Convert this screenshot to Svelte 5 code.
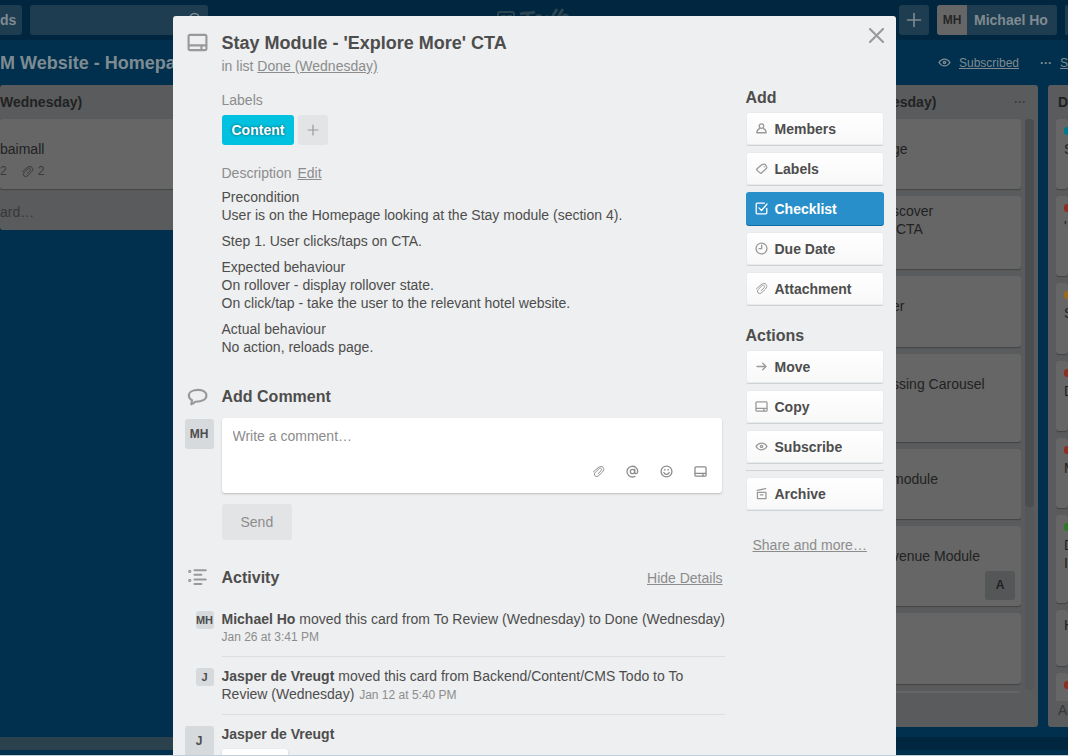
<script lang="ts">
    interface Action {
        icon: string;
        label: string;
        active?: boolean;
    }

    const add_actions: Action[] = [
        { icon: "member", label: "Members" },
        { icon: "label", label: "Labels" },
        { icon: "check", label: "Checklist", active: true },
        { icon: "clock", label: "Due Date" },
        { icon: "clip", label: "Attachment" },
    ];
    const card_actions: Action[] = [
        { icon: "arrow", label: "Move" },
        { icon: "card", label: "Copy" },
        { icon: "eye", label: "Subscribe" },
    ];

    const description = [
        ["Precondition", "User is on the Homepage looking at the Stay module (section 4)."],
        ["Step 1. User clicks/taps on CTA."],
        [
            "Expected behaviour",
            "On rollover - display rollover state.",
            "On click/tap - take the user to the relevant hotel website.",
        ],
        ["Actual behaviour", "No action, reloads page."],
    ];

    const activity = [
        {
            initials: "MH",
            name: "Michael Ho",
            text: "moved this card from To Review (Wednesday) to Done (Wednesday)",
            date: "Jan 26 at 3:41 PM",
            single: true,
        },
        {
            initials: "J",
            name: "Jasper de Vreugt",
            text: "moved this card from Backend/Content/CMS Todo to To Review (Wednesday)",
            date: "Jan 12 at 5:40 PM",
            single: false,
        },
    ];

    const cards = [
        { lines: ["ge"], height: 70, labels: true },
        { lines: ["scover", "\u00a0CTA"], height: 73, labels: false },
        { lines: ["er"], height: 71, labels: true },
        { lines: ["ssing Carousel"], height: 88, labels: true },
        { lines: ["module"], height: 70, labels: true },
        { lines: ["venue Module"], height: 80, labels: true, member: "A" },
        { lines: [], height: 71, labels: false },
        { lines: [], height: 20, labels: false },
    ];

    const next_cards = [
        { color: "#00798c", lines: ["S"], height: 70 },
        { color: "#8c2f26", lines: ["'"], height: 80 },
        { color: "#9a6a20", lines: ["S"], height: 71 },
        { color: "#8c2f26", lines: ["D"], height: 70 },
        { color: "#8c2f26", lines: ["M"], height: 70 },
        { color: "#2c7a28", lines: ["D", "I"], height: 88 },
        { color: "", lines: ["H"], height: 56 },
        { color: "#8c2f26", lines: [], height: 30 },
    ];

    let comment = $state("");
</script>

{#snippet icon(name: string, size: number)}
    <svg
        width={size}
        height={size}
        viewBox="0 0 16 16"
        fill="none"
        stroke="currentColor"
        stroke-width="1.6"
        stroke-linecap="round"
        stroke-linejoin="round"
        aria-hidden="true"
    >
        {#if name === "member"}
            <circle cx="8" cy="5" r="2.8" />
            <path d="M5.800 8.300C3.300 9 2.400 10.500 2.200 13.200h11.600C13.600 10.500 12.700 9 10.200 8.300" />
        {:else if name === "label"}
            <path d="M8.600 3.200 11.600 2.700a1.300 1.300 0 0 1 1.300.7l1.500 2.800a1.300 1.300 0 0 1-.2 1.400L8.300 13.300a1.500 1.500 0 0 1-2.200.1L2.600 10.300a1.500 1.500 0 0 1-.1-2.100z" />
            <path d="M11.300 5.800v.1" />
        {:else if name === "check"}
            <path d="M11.500 1.500H2.600A1.100 1.100 0 0 0 1.500 2.600v10.800a1.100 1.100 0 0 0 1.100 1.100h10.800a1.100 1.100 0 0 0 1.100-1.100V8" />
            <path d="m4.800 7.200 3.200 3.300 6.800-8" />
        {:else if name === "clock"}
            <circle cx="8" cy="8" r="6.700" />
            <path d="M8.200 3.800v4.400H5" />
        {:else if name === "clip"}
            <path
                d="m1.800 8.400 5.600-5c2.200-2 4.700-2.100 6.200-.5 1.500 1.700 1.100 4-.9 5.900l-4.200 4.100c-1.600 1.500-3.600 1.600-4.800.4-1.100-1.200-.9-3 .6-4.500l4.200-4.100c1-.9 2.200-1 2.900-.2.700.8.500 1.900-.4 2.800l-3.500 3.300"
                stroke-width="1.200"
            />
        {:else if name === "arrow"}
            <path d="M2.500 8h11M9.500 4l4 4-4 4" />
        {:else if name === "card"}
            <rect x="1.200" y="2.200" width="13.600" height="11.600" rx="1.200" />
            <path d="M1.500 10.200h13M11 10.500v3" />
        {:else if name === "eye"}
            <path d="M1.200 8C3 5.200 5.300 3.900 8 3.900S13 5.200 14.800 8C13 10.800 10.700 12.100 8 12.100S3 10.800 1.200 8z" />
            <circle cx="8" cy="8" r="1.400" />
        {:else if name === "archive"}
            <path d="M3 6.600h10.500v7.600H3zM2.700 4.200 13.200 2M6.600 9.600h3.300" />
        {:else if name === "at"}
            <circle cx="8" cy="8" r="2.700" />
            <path d="M10.700 5.300v4.200c0 1.700 3.800 1.500 3.800-1.500A6.600 6.600 0 1 0 11 14" />
        {:else if name === "smile"}
            <circle cx="8" cy="8" r="6.700" />
            <path d="M4.700 9.300c1.200 3 5.400 3 6.600 0M6 5.300v1M10 5.300v1" />
        {:else if name === "comment"}
            <path d="M8.600 2.200c-4 0-7.200 1.500-7.200 4.200 0 1.700 1 2.900 2.500 3.600L3.200 13.200c1.300-.3 2.400-1.200 3-2 5 .2 8.600-1.700 8.600-4.700 0-2.800-2.600-4.300-6.200-4.300z" />
        {:else if name === "list"}
            <path d="M6 1.800h9M6 5.400h5.500M6 9.200h9M6 12.800h5.500" />
            <circle cx="2.200" cy="2.700" r="0.500" />
            <circle cx="2.200" cy="9.900" r="0.500" />
        {:else if name === "search"}
            <circle cx="8" cy="6.500" r="5" />
            <path d="m4.500 10.500-3 4" />
        {:else if name === "close"}
            <path d="m1 1 14 14M15 1 1 15" stroke-width="2.200" />
        {:else if name === "plus"}
            <path d="M8 1.500v13M1.500 8h13" />
        {/if}
    </svg>
{/snippet}

{#snippet action_button(action: Action)}
    <button class="action" class:active={action.active}>
        {@render icon(action.icon, 13)}
        {action.label}
    </button>
{/snippet}

<div class="app">
    <header class="topbar">
        <div class="left">
            <button class="boards">ds</button>
            <label class="search">
                <input type="text" aria-label="Search" />
                {@render icon("search", 15)}
            </label>
        </div>
        <svg class="logo" width="74" height="30" viewBox="0 0 74 30" fill="none" stroke="currentColor" stroke-width="2" aria-hidden="true">
            <rect x="1" y="7" width="16" height="17" rx="2" />
            <path d="M5 11h3v9H5zM11 11h3v5h-3z" />
            <path d="M23 9c5-2 10 0 15-2M31 9l-4 15M36 22l3-10c2-2 4-2 5 0M46 18c7-2 7-7 3-6-4 2-5 11 1 9L60 4M56 20 66 4M62 20c2-10 7-12 9-8s-7 11-9 6" stroke-width="3" />
        </svg>
        <div class="right">
            <button class="add" aria-label="Create">{@render icon("plus", 16)}</button>
            <button class="user"><span>MH</span>Michael Ho</button>
            <span class="edge"></span>
        </div>
    </header>

    <div class="board-bar">
        <h1>M Website - Homepa</h1>
        <div class="board-links">
            {@render icon("eye", 13)}
            <a href="#subscribed">Subscribed</a>
            <b>···</b>
            <a class="cut" href="#menu">S</a>
        </div>
    </div>

    <div class="lists">
        <section class="list first">
            <h2>Wednesday)</h2>
            <article class="tile labelled">
                <p>baimall</p>
                <div class="badges"><span>2</span>{@render icon("clip", 13)}<span>2</span></div>
            </article>
            <a class="more" href="#add">ard…</a>
        </section>
        <section class="list">
            <h2>esday) <span>···</span></h2>
            <div class="scroller">
                <div class="tiles">
                    {#each cards as card}
                        <article class="tile" class:labelled={card.labels} style:height="{card.height}px">
                            {#each card.lines as line}
                                <p>{line}</p>
                            {/each}
                            {#if card.member}
                                <span class="initials">{card.member}</span>
                            {/if}
                        </article>
                    {/each}
                </div>
                <div class="track"><div class="thumb"></div></div>
            </div>
        </section>
        <section class="list last">
            <h2>D</h2>
            <div class="tiles">
                {#each next_cards as card}
                    <article class="tile" style:height="{card.height}px">
                        {#if card.color}
                            <i style:background={card.color}></i>
                        {/if}
                        {#each card.lines as line}
                            <p>{line}</p>
                        {/each}
                    </article>
                {/each}
            </div>
            <a class="more" href="#add">Ad</a>
        </section>
    </div>
    <div class="hscroll"><div></div></div>

    <div class="overlay">
        <div class="modal" role="dialog" aria-labelledby="card-title">
            <div class="title">
                <span class="glyph">{@render icon("card", 21)}</span>
                <div>
                    <h2 id="card-title">Stay Module - 'Explore More' CTA</h2>
                    <p>in list <a href="#list">Done (Wednesday)</a></p>
                </div>
                <button class="close" aria-label="Close">{@render icon("close", 15)}</button>
            </div>

            <div class="columns">
                <main>
                    <div class="details">
                        <h4>Labels</h4>
                        <div class="labels">
                            <button class="tag">Content</button>
                            <button class="tag-add" aria-label="Add label">{@render icon("plus", 12)}</button>
                        </div>
                        <h4>Description <a href="#edit">Edit</a></h4>
                        <div class="description">
                            {#each description as lines}
                                <p>
                                    {#each lines as line, i}
                                        {#if i}<br />{/if}{line}
                                    {/each}
                                </p>
                            {/each}
                        </div>
                    </div>

                    <div class="heading">
                        <span class="glyph">{@render icon("comment", 21)}</span>
                        <h3>Add Comment</h3>
                    </div>
                    <div class="row">
                        <span class="avatar">MH</span>
                        <form>
                            <div class="box">
                                <textarea bind:value={comment} aria-label="Comment" placeholder="Write a comment…"></textarea>
                                <div class="tools">
                                    <button type="button" aria-label="Attach">{@render icon("clip", 13)}</button>
                                    <button type="button" aria-label="Mention">{@render icon("at", 13)}</button>
                                    <button type="button" aria-label="Emoji">{@render icon("smile", 13)}</button>
                                    <button type="button" aria-label="Card">{@render icon("card", 13)}</button>
                                </div>
                            </div>
                            <button type="button" class="send">Send</button>
                        </form>
                    </div>

                    <div class="heading activity">
                        <span class="glyph">{@render icon("list", 20)}</span>
                        <h3>Activity</h3>
                        <a href="#details">Hide Details</a>
                    </div>
                    {#each activity as item}
                        <div class="row">
                            <span class="avatar small">{item.initials}</span>
                            <div class="entry" class:single={item.single}>
                                <b>{item.name}</b>
                                {item.text}
                                <small>{item.date}</small>
                            </div>
                        </div>
                    {/each}
                    <div class="row">
                        <span class="avatar">J</span>
                        <div class="entry">
                            <b>Jasper de Vreugt</b>
                            <div class="bubble"></div>
                        </div>
                    </div>
                </main>

                <aside>
                    <h3>Add</h3>
                    <div class="actions">
                        {#each add_actions as action}
                            {@render action_button(action)}
                        {/each}
                    </div>
                    <h3>Actions</h3>
                    <div class="actions">
                        {#each card_actions as action}
                            {@render action_button(action)}
                        {/each}
                        <hr />
                        {@render action_button({ icon: "archive", label: "Archive" })}
                    </div>
                    <a class="share" href="#share">Share and more…</a>
                </aside>
            </div>
        </div>
    </div>
</div>

<style>
    :global(body) {
        background: #c3ced6;
    }
    .app {
        position: relative;
        display: flex;
        flex-direction: column;
        box-sizing: border-box;
        height: 100vh;
        padding-bottom: 5px;
        border-bottom: 1px solid #c3ced6;
        overflow: hidden;
        background: #00304d;
        color: #4d4d4d;
        font: 14px/18px "Liberation Sans", Arial, sans-serif;
    }
    .app :global(*) {
        box-sizing: border-box;
    }
    h1, h2, h3, h4, p, form {
        margin: 0;
    }
    button, textarea, input {
        margin: 0;
        padding: 0;
        border: 0;
        background: none;
        color: inherit;
        font: inherit;
    }
    a {
        color: inherit;
    }
    svg {
        display: block;
        flex: none;
    }

    /* board behind the dialog */
    .topbar {
        display: flex;
        justify-content: space-between;
        flex: none;
        height: 40px;
        padding-top: 5px;
        background: #002640;
        color: #7f8b92;
    }
    .left, .right {
        display: flex;
        flex: 1;
        gap: 8px;
    }
    .right {
        justify-content: flex-end;
    }
    .boards, .search, .add, .user, .edge {
        height: 30px;
        border-radius: 3px;
        background: #1f3d50;
        font-weight: bold;
    }
    .boards {
        width: 22px;
        padding-right: 7px;
        border-radius: 0 3px 3px 0;
        text-align: right;
    }
    .search {
        display: flex;
        width: 178px;
        padding: 7px 6px 0 0;
    }
    .search input {
        flex: 1;
        min-width: 0;
    }
    .logo {
        color: #2c4350;
    }
    .add {
        display: grid;
        place-items: center;
        width: 30px;
    }
    .user {
        display: flex;
        align-items: center;
        width: 120px;
        gap: 7px;
        overflow: hidden;
        white-space: nowrap;
    }
    .user span {
        width: 30px;
        background: #666;
        color: #262626;
        font-size: 12px;
        line-height: 30px;
        text-align: center;
    }
    .edge {
        width: 3px;
    }
    .board-bar {
        display: flex;
        justify-content: space-between;
        align-items: center;
        flex: none;
        height: 45px;
        color: #7f8b92;
    }
    .board-bar h1 {
        font-size: 18px;
        line-height: 22px;
    }
    .board-links {
        display: flex;
        align-items: center;
        gap: 8px;
        font-size: 12px;
    }
    .board-links b {
        margin-left: 13px;
    }
    .cut {
        width: 8px;
    }
    .lists {
        display: flex;
        flex: 1;
        gap: 10px;
        min-height: 0;
        color: #222;
    }
    .list {
        display: flex;
        flex-direction: column;
        width: 154px;
        padding: 0 4px 34px 0;
        border-radius: 3px;
        background: #595b5d;
    }
    .list h2 {
        display: flex;
        justify-content: space-between;
        flex: none;
        height: 34px;
        padding: 8px 8px 0;
        font-size: 14px;
    }
    .list h2 span {
        color: #3d3d3d;
        font-size: 12px;
    }
    .list.first {
        width: 190px;
        height: 145px;
        margin-right: auto;
        padding: 0;
    }
    .first h2 {
        padding-left: 0;
    }
    .first .tile {
        height: 70px;
        padding-left: 0;
    }
    .list.last {
        width: 20px;
        padding: 0;
        border-radius: 3px 0 0 3px;
        overflow: hidden;
    }
    .last h2 {
        padding: 8px 0 0 10px;
    }
    .last .tiles {
        margin-left: 8px;
    }
    .last .tile {
        padding: 6px 0 0 8px;
    }
    .badges {
        display: flex;
        align-items: center;
        gap: 4px;
        margin-top: 4px;
        font-size: 12px;
        color: #3a3a3a;
    }
    .badges span:first-child {
        margin-right: 10px;
    }
    .more {
        margin-top: 14px;
        color: #383838;
        text-decoration: none;
    }
    .last .more {
        margin: 0 0 8px 10px;
    }
    .scroller {
        display: flex;
        flex: 1;
        gap: 4px;
        min-height: 0;
    }
    .tiles {
        display: flex;
        flex: 1;
        flex-direction: column;
        gap: 7px;
        min-height: 0;
        overflow: hidden;
    }
    .tile {
        flex: none;
        padding: 6px 6px 0 8px;
        border-radius: 3px;
        background: #666;
        box-shadow: 0 1px 1px #444;
        white-space: nowrap;
    }
    .tile.labelled {
        padding-top: 21px;
    }
    .tile i {
        display: block;
        width: 32px;
        height: 8px;
        margin: 2px 0 5px;
        border-radius: 3px;
    }
    .initials {
        display: block;
        width: 30px;
        margin: 6px 0 0 auto;
        border-radius: 3px;
        background: #545658;
        font-size: 12px;
        font-weight: bold;
        line-height: 29px;
        text-align: center;
    }
    .track {
        width: 9px;
        margin-bottom: 3px;
        border-radius: 4px;
        background: #55575a;
    }
    .thumb {
        height: 68%;
        border-radius: 4px;
        background: #4b4d50;
    }
    .hscroll {
        flex: none;
        height: 13px;
        margin-top: 10px;
        background: #002640;
    }
    .hscroll div {
        width: 50%;
        height: 100%;
        background: #2c414e;
    }

    /* card dialog */
    .overlay {
        position: absolute;
        inset: 0;
        display: flex;
        justify-content: center;
        align-items: flex-start;
        padding-top: 16px;
    }
    .modal {
        width: min(100%, 723px);
        min-height: 100%;
        padding: 16px 12px;
        border-radius: 3px 3px 0 0;
        background: #edeff0;
    }
    .title {
        display: flex;
    }
    .title h2 {
        font-size: 18px;
        line-height: 22px;
    }
    .title p {
        margin-top: 3px;
        color: #8c8c8c;
    }
    .glyph {
        flex: none;
        width: 37px;
        padding-left: 2px;
        color: #999;
    }
    .close {
        align-self: flex-start;
        margin: -4px 0 0 auto;
        color: #999;
    }
    .columns {
        display: grid;
        grid-template-columns: minmax(0, 1fr) 138px;
        gap: 21px;
    }
    main {
        padding-top: 16px;
    }
    .details {
        padding-left: 37px;
    }
    h4 {
        color: #8c8c8c;
        font-size: 14px;
        font-weight: normal;
    }
    h4 a {
        margin-left: 2px;
    }
    .labels {
        display: flex;
        gap: 4px;
        margin: 6px 0 19px;
    }
    .tag, .tag-add {
        height: 30px;
        border-radius: 3px;
    }
    .tag {
        padding: 0 10px;
        background: #00c2e0;
        color: #fff;
        font-weight: bold;
        text-shadow: 0 0 3px #0009;
    }
    .tag-add {
        display: grid;
        place-items: center;
        width: 30px;
        background: #e2e4e6;
        color: #999;
    }
    .description {
        display: grid;
        gap: 8px;
        margin-top: 6px;
    }
    .heading {
        display: flex;
        align-items: center;
        margin: 30px 2px 10px 0;
    }
    .heading a {
        margin-left: auto;
        color: #8c8c8c;
    }
    .heading.activity {
        margin: 27px 2px 21px 0;
    }
    h3 {
        font-size: 16px;
        line-height: 22px;
    }
    .row {
        display: flex;
        align-items: flex-start;
        gap: 8px;
    }
    .avatar {
        flex: none;
        width: 29px;
        margin-top: 1px;
        border-radius: 3px;
        background: #d6dadc;
        font-size: 12px;
        font-weight: bold;
        line-height: 30px;
        text-align: center;
    }
    .avatar.small {
        width: 18px;
        margin: 1px 0 0 11px;
        font-size: 11px;
        line-height: 18px;
    }
    form {
        flex: 1;
        margin-right: 3px;
    }
    .box {
        padding: 9px 15px 15px 11px;
        border-radius: 3px;
        background: #fff;
        box-shadow: 0 1px 2px #bbb;
    }
    textarea {
        display: block;
        width: 100%;
        height: 38px;
        outline: 0;
        resize: none;
    }
    textarea::placeholder {
        color: #8c8c8c;
    }
    .tools {
        display: flex;
        justify-content: flex-end;
        gap: 21px;
        color: #8c8c8c;
    }
    .send {
        height: 36px;
        margin-top: 11px;
        padding: 0 19px;
        border-radius: 3px;
        background: #e2e4e6;
        color: #8c8c8c;
    }
    .entry {
        flex: 1;
        min-width: 0;
        margin-bottom: 10px;
        padding-bottom: 10px;
        border-bottom: 1px solid #dcdfe1;
    }
    small {
        margin-left: 1px;
        color: #8c8c8c;
        font-size: 12px;
    }
    .single {
        white-space: nowrap;
    }
    .single small {
        display: block;
        margin-left: 0;
    }
    .bubble {
        width: 66px;
        height: 34px;
        margin-top: 6px;
        border-radius: 3px;
        background: #fff;
        box-shadow: 0 1px 2px #bbb;
    }

    aside {
        padding-top: 12px;
    }
    .actions {
        display: grid;
        gap: 7px;
        margin: 3px 0 20px;
    }
    .action {
        display: flex;
        align-items: center;
        gap: 7px;
        height: 33px;
        padding: 0 9px;
        border-radius: 3px;
        background: linear-gradient(#fff, #f8f8f8);
        box-shadow: inset 0 0 0 1px #e8eaec, 0 1px 0 #cdd2d4;
        font-weight: bold;
    }
    .action svg {
        color: #999;
    }
    .action.active {
        background: #298fca;
        box-shadow: 0 1px 0 #0f6ba3;
        color: #fff;
    }
    .active svg {
        color: #fff;
    }
    hr {
        width: 100%;
        height: 1px;
        margin: 0 0 -3px;
        border: 0;
        background: #cdd2d4;
    }
    .share {
        display: block;
        margin: 26px 0 0 7px;
        color: #8c8c8c;
    }
</style>
